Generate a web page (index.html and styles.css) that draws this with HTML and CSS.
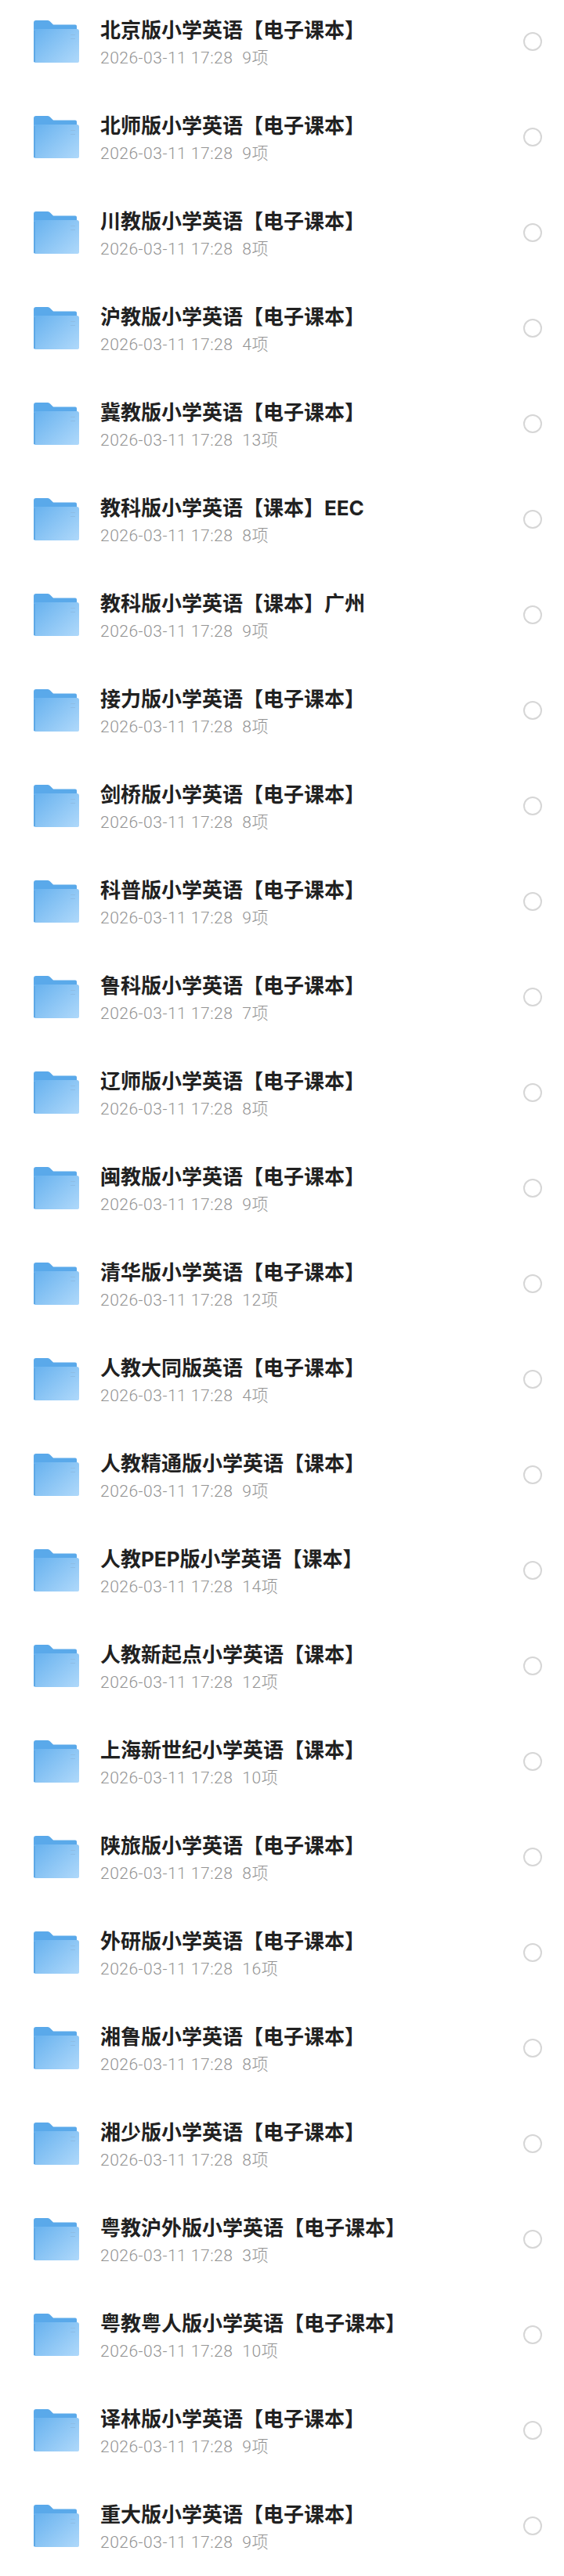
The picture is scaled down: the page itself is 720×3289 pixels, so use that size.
FILE: index.html
```html
<!DOCTYPE html>
<html lang="zh-CN">
<head>
    <meta charset="UTF-8">
    <meta name="viewport" content="width=device-width, initial-scale=1.0">
    <title>小学英语</title>
    <link rel="stylesheet" href="styles.css">
</head>
<body>
    <svg class="icon-defs" width="0" height="0" aria-hidden="true">
        <defs>
            <linearGradient id="folder-front" x1="0" y1="0.1" x2="1" y2="0.9">
                <stop offset="0" stop-color="#6ab3ef"/>
                <stop offset="1" stop-color="#acd7fa"/>
            </linearGradient>
        </defs>
        <symbol id="folder" viewBox="0 0 58 54">
            <path d="M0 3a3 3 0 0 1 3-3h15a4 4 0 0 1 3 1.500l4 4h28a2 2 0 0 1 2 2v10H0z" fill="#5aa9ea"/>
            <path d="M0 13a2 2 0 0 1 2-2h53a3 3 0 0 1 3 3v38a2 2 0 0 1-2 2H2a2 2 0 0 1-2-2z" fill="url(#folder-front)"/>
            <rect x="0" y="13" width="2" height="40" fill="#5ea8e6"/>
            <rect x="47" y="18" width="6" height="1" fill="#8dbde6"/>
            <rect x="47" y="23" width="6" height="1" fill="#8dbde6"/>
        </symbol>
    </svg>

    <div class="list">
        <div class="row">
            <svg class="folder"><use href="#folder"/></svg>
            <div class="info">
                <div class="name">北京版小学英语【电子课本】</div>
                <div class="meta"><span>2026-03-11 17:28</span><span>9项</span></div>
            </div>
            <div class="check"></div>
        </div>
        <div class="row">
            <svg class="folder"><use href="#folder"/></svg>
            <div class="info">
                <div class="name">北师版小学英语【电子课本】</div>
                <div class="meta"><span>2026-03-11 17:28</span><span>9项</span></div>
            </div>
            <div class="check"></div>
        </div>
        <div class="row">
            <svg class="folder"><use href="#folder"/></svg>
            <div class="info">
                <div class="name">川教版小学英语【电子课本】</div>
                <div class="meta"><span>2026-03-11 17:28</span><span>8项</span></div>
            </div>
            <div class="check"></div>
        </div>
        <div class="row">
            <svg class="folder"><use href="#folder"/></svg>
            <div class="info">
                <div class="name">沪教版小学英语【电子课本】</div>
                <div class="meta"><span>2026-03-11 17:28</span><span>4项</span></div>
            </div>
            <div class="check"></div>
        </div>
        <div class="row">
            <svg class="folder"><use href="#folder"/></svg>
            <div class="info">
                <div class="name">冀教版小学英语【电子课本】</div>
                <div class="meta"><span>2026-03-11 17:28</span><span>13项</span></div>
            </div>
            <div class="check"></div>
        </div>
        <div class="row">
            <svg class="folder"><use href="#folder"/></svg>
            <div class="info">
                <div class="name">教科版小学英语【课本】EEC</div>
                <div class="meta"><span>2026-03-11 17:28</span><span>8项</span></div>
            </div>
            <div class="check"></div>
        </div>
        <div class="row">
            <svg class="folder"><use href="#folder"/></svg>
            <div class="info">
                <div class="name">教科版小学英语【课本】广州</div>
                <div class="meta"><span>2026-03-11 17:28</span><span>9项</span></div>
            </div>
            <div class="check"></div>
        </div>
        <div class="row">
            <svg class="folder"><use href="#folder"/></svg>
            <div class="info">
                <div class="name">接力版小学英语【电子课本】</div>
                <div class="meta"><span>2026-03-11 17:28</span><span>8项</span></div>
            </div>
            <div class="check"></div>
        </div>
        <div class="row">
            <svg class="folder"><use href="#folder"/></svg>
            <div class="info">
                <div class="name">剑桥版小学英语【电子课本】</div>
                <div class="meta"><span>2026-03-11 17:28</span><span>8项</span></div>
            </div>
            <div class="check"></div>
        </div>
        <div class="row">
            <svg class="folder"><use href="#folder"/></svg>
            <div class="info">
                <div class="name">科普版小学英语【电子课本】</div>
                <div class="meta"><span>2026-03-11 17:28</span><span>9项</span></div>
            </div>
            <div class="check"></div>
        </div>
        <div class="row">
            <svg class="folder"><use href="#folder"/></svg>
            <div class="info">
                <div class="name">鲁科版小学英语【电子课本】</div>
                <div class="meta"><span>2026-03-11 17:28</span><span>7项</span></div>
            </div>
            <div class="check"></div>
        </div>
        <div class="row">
            <svg class="folder"><use href="#folder"/></svg>
            <div class="info">
                <div class="name">辽师版小学英语【电子课本】</div>
                <div class="meta"><span>2026-03-11 17:28</span><span>8项</span></div>
            </div>
            <div class="check"></div>
        </div>
        <div class="row">
            <svg class="folder"><use href="#folder"/></svg>
            <div class="info">
                <div class="name">闽教版小学英语【电子课本】</div>
                <div class="meta"><span>2026-03-11 17:28</span><span>9项</span></div>
            </div>
            <div class="check"></div>
        </div>
        <div class="row">
            <svg class="folder"><use href="#folder"/></svg>
            <div class="info">
                <div class="name">清华版小学英语【电子课本】</div>
                <div class="meta"><span>2026-03-11 17:28</span><span>12项</span></div>
            </div>
            <div class="check"></div>
        </div>
        <div class="row">
            <svg class="folder"><use href="#folder"/></svg>
            <div class="info">
                <div class="name">人教大同版英语【电子课本】</div>
                <div class="meta"><span>2026-03-11 17:28</span><span>4项</span></div>
            </div>
            <div class="check"></div>
        </div>
        <div class="row">
            <svg class="folder"><use href="#folder"/></svg>
            <div class="info">
                <div class="name">人教精通版小学英语【课本】</div>
                <div class="meta"><span>2026-03-11 17:28</span><span>9项</span></div>
            </div>
            <div class="check"></div>
        </div>
        <div class="row">
            <svg class="folder"><use href="#folder"/></svg>
            <div class="info">
                <div class="name">人教PEP版小学英语【课本】</div>
                <div class="meta"><span>2026-03-11 17:28</span><span>14项</span></div>
            </div>
            <div class="check"></div>
        </div>
        <div class="row">
            <svg class="folder"><use href="#folder"/></svg>
            <div class="info">
                <div class="name">人教新起点小学英语【课本】</div>
                <div class="meta"><span>2026-03-11 17:28</span><span>12项</span></div>
            </div>
            <div class="check"></div>
        </div>
        <div class="row">
            <svg class="folder"><use href="#folder"/></svg>
            <div class="info">
                <div class="name">上海新世纪小学英语【课本】</div>
                <div class="meta"><span>2026-03-11 17:28</span><span>10项</span></div>
            </div>
            <div class="check"></div>
        </div>
        <div class="row">
            <svg class="folder"><use href="#folder"/></svg>
            <div class="info">
                <div class="name">陕旅版小学英语【电子课本】</div>
                <div class="meta"><span>2026-03-11 17:28</span><span>8项</span></div>
            </div>
            <div class="check"></div>
        </div>
        <div class="row">
            <svg class="folder"><use href="#folder"/></svg>
            <div class="info">
                <div class="name">外研版小学英语【电子课本】</div>
                <div class="meta"><span>2026-03-11 17:28</span><span>16项</span></div>
            </div>
            <div class="check"></div>
        </div>
        <div class="row">
            <svg class="folder"><use href="#folder"/></svg>
            <div class="info">
                <div class="name">湘鲁版小学英语【电子课本】</div>
                <div class="meta"><span>2026-03-11 17:28</span><span>8项</span></div>
            </div>
            <div class="check"></div>
        </div>
        <div class="row">
            <svg class="folder"><use href="#folder"/></svg>
            <div class="info">
                <div class="name">湘少版小学英语【电子课本】</div>
                <div class="meta"><span>2026-03-11 17:28</span><span>8项</span></div>
            </div>
            <div class="check"></div>
        </div>
        <div class="row">
            <svg class="folder"><use href="#folder"/></svg>
            <div class="info">
                <div class="name">粤教沪外版小学英语【电子课本】</div>
                <div class="meta"><span>2026-03-11 17:28</span><span>3项</span></div>
            </div>
            <div class="check"></div>
        </div>
        <div class="row">
            <svg class="folder"><use href="#folder"/></svg>
            <div class="info">
                <div class="name">粤教粤人版小学英语【电子课本】</div>
                <div class="meta"><span>2026-03-11 17:28</span><span>10项</span></div>
            </div>
            <div class="check"></div>
        </div>
        <div class="row">
            <svg class="folder"><use href="#folder"/></svg>
            <div class="info">
                <div class="name">译林版小学英语【电子课本】</div>
                <div class="meta"><span>2026-03-11 17:28</span><span>9项</span></div>
            </div>
            <div class="check"></div>
        </div>
        <div class="row">
            <svg class="folder"><use href="#folder"/></svg>
            <div class="info">
                <div class="name">重大版小学英语【电子课本】</div>
                <div class="meta"><span>2026-03-11 17:28</span><span>9项</span></div>
            </div>
            <div class="check"></div>
        </div>
    </div>
</body>
</html>
```

FILE: styles.css
```css
body {
    margin: 0;
    padding: 0;
    background-color: #fff;
    font-family: 'Roboto', 'Noto Sans CJK SC', sans-serif;
}

.icon-defs {
    display: block;
    height: 0;
}

.list {
    display: flex;
    flex-direction: column;
    gap: 56px;
    padding: 20px 0 31px;
}

.row {
    display: flex;
    align-items: center;
    height: 66px;
    padding: 0 28px 0 43px;
}

.folder {
    flex: none;
    width: 58px;
    height: 54px;
}

.info {
    flex: 1;
    margin-left: 27px;
    padding-top: 3px;
}

.name {
    color: #212121;
    font-family: 'Inter', 'Noto Sans CJK SC', sans-serif;
    font-size: 26px;
    font-weight: 700;
    line-height: 36px;
    white-space: nowrap;
}

.meta {
    display: flex;
    gap: 12px;
    margin-top: 2px;
    color: #939393;
    font-size: 21px;
    font-weight: 300;
    letter-spacing: 0.5px;
    line-height: 30px;
}

/* Unchecked radio on the right */
.check {
    flex: none;
    width: 20px;
    height: 20px;
    border: 2px solid #d6d6d6;
    border-radius: 50%;
}
```
